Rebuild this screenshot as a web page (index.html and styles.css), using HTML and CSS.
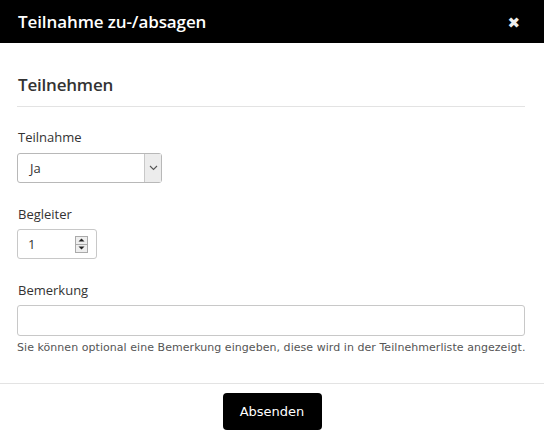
FILE: index.html
```html
<!DOCTYPE html>
<html lang="de">
<head>
<meta charset="utf-8">
<title>Teilnahme zu-/absagen</title>
<link rel="stylesheet" href="styles.css">
</head>
<body>
<div class="modal">
  <div class="modal-header">
    <h1 class="modal-title">Teilnahme zu-/absagen</h1>
    <span class="close">&#x2716;</span>
  </div>
  <div class="modal-body">
    <h2 class="section-title">Teilnehmen</h2>
    <div class="field">
      <label class="label">Teilnahme</label>
      <div class="select">
        <span class="select-value">Ja</span>
        <span class="select-arrow">
          <svg width="9" height="6" viewBox="0 0 9 6"><path d="M1 1 L4.5 4.5 L8 1" fill="none" stroke="#555" stroke-width="1.1"/></svg>
        </span>
      </div>
    </div>
    <div class="field">
      <label class="label">Begleiter</label>
      <div class="number">
        <span class="number-value">1</span>
        <span class="spinner">
          <span class="spin up"><svg width="7" height="4" viewBox="0 0 7 4"><path d="M0.5 3.5 L3.5 0.5 L6.5 3.5 Z" fill="#222"/></svg></span>
          <span class="spin down"><svg width="7" height="4" viewBox="0 0 7 4"><path d="M0.5 0.5 L3.5 3.5 L6.5 0.5 Z" fill="#222"/></svg></span>
        </span>
      </div>
    </div>
    <div class="field">
      <label class="label">Bemerkung</label>
      <div class="text-input"></div>
      <p class="help">Sie können optional eine Bemerkung eingeben, diese wird in der Teilnehmerliste angezeigt.</p>
    </div>
  </div>
  <div class="modal-footer">
    <button class="btn">Absenden</button>
  </div>
</div>
</body>
</html>
```
FILE: styles.css
```css
html, body { margin: 0; padding: 0; background: #fff; }
body { font-family: "Open Sans", "DejaVu Sans", sans-serif; color: #333; width: 544px; height: 436px; overflow: hidden; }
.modal { display: flex; flex-direction: column; }
.modal-header { height: 43px; background: #000; display: flex; align-items: center; justify-content: space-between; padding: 0 18px; box-sizing: border-box; }
.modal-title { margin: 0; font-size: 17px; font-weight: 600; color: #fff; letter-spacing: -0.1px; }
.close { color: #eee; font-size: 15px; margin-right: 6px; }
.modal-body { padding: 0 19px 0 17px; }
.section-title { margin: 0; padding: 32px 1px 11px; font-size: 17px; font-weight: 600; color: #333; border-bottom: 1px solid #e3e3e3; line-height: 20px; letter-spacing: -0.2px; }
.field { display: flex; flex-direction: column; align-items: flex-start; }
.label { font-size: 13px; line-height: 16px; color: #333; margin: 0 0 7px 1px; }
.field:nth-of-type(1) { margin-top: 22px; }
.field:nth-of-type(1) .label { margin-bottom: 8px; }
.field + .field { margin-top: 23px; }
.select { width: 145px; height: 30px; box-sizing: border-box; border: 1px solid #b8b8b8; border-radius: 3px; display: flex; }
.select-value { flex: 1; font-size: 13px; line-height: 28px; padding-left: 12px; }
.select-arrow { width: 16px; background: #ececec; border-left: 1px solid #c8c8c8; display: flex; align-items: center; justify-content: center; }
.number { width: 80px; height: 30px; box-sizing: border-box; border: 1px solid #c8c8c8; border-radius: 3px; display: flex; align-items: center; padding: 0 8px 0 10px; }
.number-value { flex: 1; font-size: 13px; }
.spinner { display: flex; flex-direction: column; width: 13px; height: 17px; border: 1px solid #aaa; box-sizing: border-box; }
.spin { flex: 1; display: flex; align-items: center; justify-content: center; background: #eee; }
.spin.up { border-bottom: 1px solid #aaa; }
.text-input { width: 508px; height: 31px; box-sizing: border-box; border: 1px solid #c8c8c8; border-radius: 3px; }
.help { margin: 5px 0 0 0; font-family: "DejaVu Sans", sans-serif; font-size: 11px; color: #555; white-space: nowrap; letter-spacing: 0.05px; }
.modal-footer { margin-top: 29px; border-top: 1px solid #e3e3e3; display: flex; justify-content: center; padding-top: 9px; }
.btn { width: 99px; height: 37px; background: #000; color: #fff; border: none; border-radius: 4px; font-family: "DejaVu Sans", sans-serif; font-size: 13px; }
```
